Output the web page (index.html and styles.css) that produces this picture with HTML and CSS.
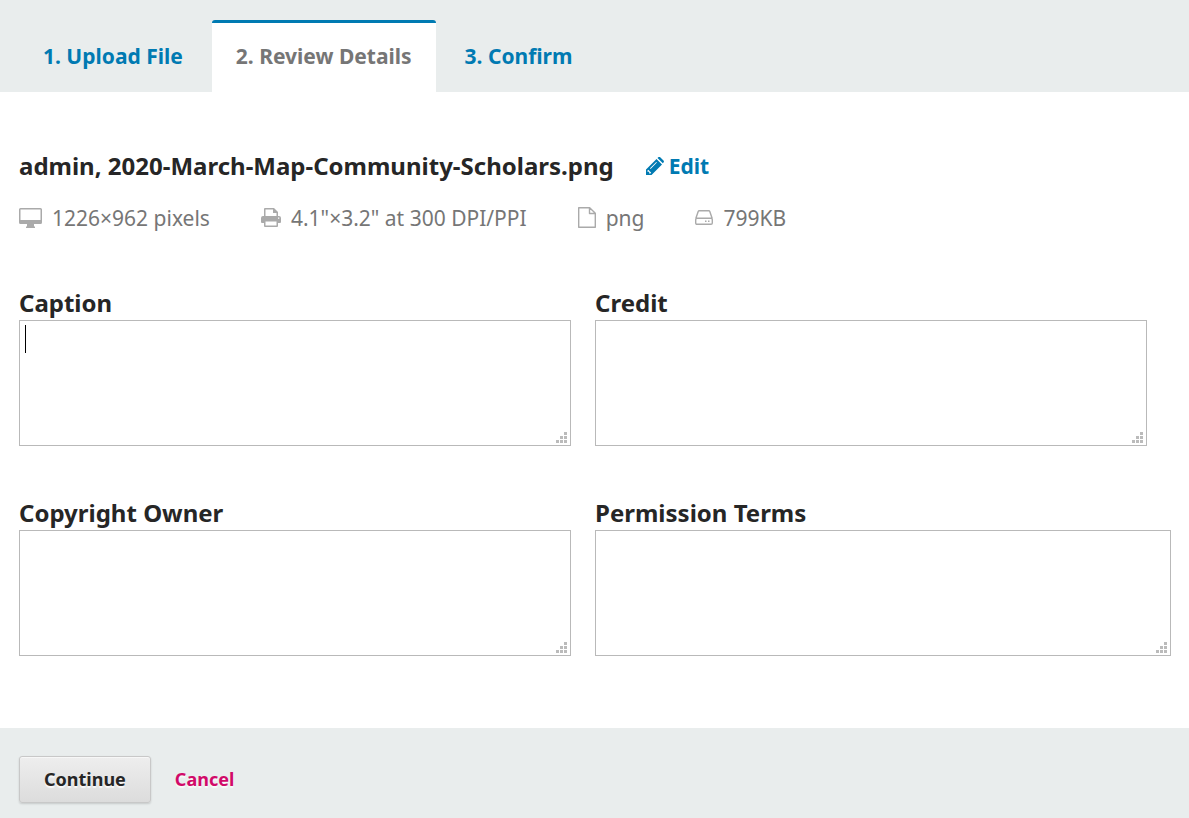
FILE: index.html
```
<!DOCTYPE html>
<html lang="en">
<head>
<meta charset="utf-8">
<title>Review Details</title>
<link rel="stylesheet" href="styles.css">
</head>
<body>
<nav class="tabs" aria-label="Upload steps">
  <a class="tab" href="#upload">1. Upload File</a>
  <a class="tab tab-active" href="#details" aria-current="step">2. Review Details</a>
  <a class="tab" href="#confirm">3. Confirm</a>
</nav>
<form class="form">
  <main class="content">
    <div class="heading">
      <h1 class="title">admin, 2020-March-Map-Community-Scholars.png</h1>
      <a class="edit" href="#edit">
        <svg class="pencil" viewBox="0 0 18 18" width="18" height="18" aria-hidden="true"><path fill="currentColor" fill-rule="evenodd" d="M0 18v-5.500L10.500 2l5.500 5.500L5.500 18zM1.500 13.600v1.100h1.700v1.800h1.200l.8-.8-2.900-2.900zM4 11.300l.6.6 6.300-6.300-.6-.6zM11.500 1l.8-.7c.6-.5 1.300-.5 1.900 0L17.500 3.600c.6.6.6 1.300 0 1.900L16.800 6.300z"/></svg>
        <span>Edit</span>
      </a>
    </div>
    <ul class="meta">
      <li class="meta-item">
        <svg width="23" height="20" viewBox="0 0 23 20" aria-hidden="true"><path fill="#aaa" fill-rule="evenodd" d="M1.500 0h20Q23 0 23 1.500v13q0 1.500-1.500 1.500H15v2.500h1V20H7v-1.500h1V16H1.500Q0 16 0 14.500v-13Q0 0 1.500 0zM1.500 1.500V12h20V1.500z"/></svg>
        <span>1226×962 pixels</span>
      </li>
      <li class="meta-item">
        <svg width="20" height="19" viewBox="0 0 20 19" aria-hidden="true"><path fill="#aaa" fill-rule="evenodd" d="M3 8V1q0-1 1-1h9l4 4v4h1q2 0 2 2v4q0 1-1 1h-2v3q0 1-1 1H4q-1 0-1-1v-3H1q-1 0-1-1v-4q0-2 2-2zM4.500 1.500V8h11V5H12V1.500zM4.500 13.500v4h11v-4zM17 9.500v1.300h1.300V9.500z"/></svg>
        <span>4.1"×3.2" at 300 DPI/PPI</span>
      </li>
      <li class="meta-item">
        <svg width="18" height="21" viewBox="0 0 18 21" aria-hidden="true"><path fill="none" stroke="#aaa" stroke-width="1.400" stroke-linejoin="round" d="M.7.7h11l5.600 5.600v14H.7zM11.500.7v5.800h5.800"/></svg>
        <span>png</span>
      </li>
      <li class="meta-item">
        <svg width="18" height="15" viewBox="0 0 18 15" aria-hidden="true"><path fill="none" stroke="#aaa" stroke-width="1.400" stroke-linejoin="round" d="M.8 8.500 3.200 1.500q.3-.8 1-.8h9.600q.7 0 1 .8l2.400 7M2 8.200h14q1.300 0 1.300 1.300V13q0 1.300-1.300 1.300H2Q.7 14.300.7 13V9.500Q.7 8.200 2 8.200z"/><path fill="#aaa" d="M10 10.500h1.500V12H10zM13 10.500h1.500V12H13z"/></svg>
        <span>799KB</span>
      </li>
    </ul>
    <div class="fields">
      <div class="field">
        <label class="label" for="caption">Caption</label>
        <div class="box">
          <textarea class="textarea" id="caption"></textarea>
          <span class="caret"></span>
          <svg class="grip" width="11" height="11" viewBox="0 0 11 11" aria-hidden="true"><path d="M8 0h3v3H8zM4 4h3v3H4zM8 4h3v3H8zM0 8h3v3H0zM4 8h3v3H4zM8 8h3v3H8z"/></svg>
        </div>
      </div>
      <div class="field">
        <label class="label" for="credit">Credit</label>
        <div class="box">
          <textarea class="textarea" id="credit"></textarea>
          <svg class="grip" width="11" height="11" viewBox="0 0 11 11" aria-hidden="true"><path d="M8 0h3v3H8zM4 4h3v3H4zM8 4h3v3H8zM0 8h3v3H0zM4 8h3v3H4zM8 8h3v3H8z"/></svg>
        </div>
      </div>
      <div class="field">
        <label class="label" for="owner">Copyright Owner</label>
        <div class="box">
          <textarea class="textarea" id="owner"></textarea>
          <svg class="grip" width="11" height="11" viewBox="0 0 11 11" aria-hidden="true"><path d="M8 0h3v3H8zM4 4h3v3H4zM8 4h3v3H8zM0 8h3v3H0zM4 8h3v3H4zM8 8h3v3H8z"/></svg>
        </div>
      </div>
      <div class="field field-last">
        <label class="label" for="terms">Permission Terms</label>
        <div class="box">
          <textarea class="textarea" id="terms"></textarea>
          <svg class="grip" width="11" height="11" viewBox="0 0 11 11" aria-hidden="true"><path d="M8 0h3v3H8zM4 4h3v3H4zM8 4h3v3H8zM0 8h3v3H0zM4 8h3v3H4zM8 8h3v3H8z"/></svg>
        </div>
      </div>
    </div>
  </main>
  <footer class="footer">
    <button class="continue" type="button">Continue</button>
    <a class="cancel" href="#cancel">Cancel</a>
  </footer>
</form>
</body>
</html>
```
FILE: styles.css
```
* {
  box-sizing: border-box;
}

body {
  display: flex;
  flex-direction: column;
  min-height: 100vh;
  margin: 0;
  background: #fff;
  color: #262626;
  font-family: "Noto Sans", sans-serif;
  font-size: 21px;
}

a {
  color: #007ab2;
  font-weight: 700;
  text-decoration: none;
}

.tabs {
  display: flex;
  gap: 5px;
  padding: 20px 19px 0;
  background: #e9eded;
}

.tab {
  padding: 19px 24px 21px;
  border-top: 3px solid transparent;
  border-radius: 3px 3px 0 0;
  line-height: 29px;
}

.tab-active {
  border-top-color: #007ab2;
  background: #fff;
  color: #767676;
}

.form {
  display: flex;
  flex: 1;
  flex-direction: column;
}

.content {
  flex: 1;
  padding: 56px 18px 72px 19px;
}

.heading {
  display: flex;
  align-items: baseline;
  gap: 32px;
}

.title {
  margin: 0;
  font-size: 24px;
  line-height: 35px;
}

.edit {
  display: flex;
  align-items: center;
  gap: 5px;
  line-height: 35px;
}

.meta {
  display: flex;
  flex-wrap: wrap;
  gap: 51px;
  margin: 18px 0 52px;
  padding: 0;
  color: #767676;
  line-height: 32px;
  list-style: none;
}

.meta-item {
  display: flex;
  align-items: center;
  gap: 10px;
}

.fields {
  display: grid;
  grid-template-columns: 1fr 1fr;
  row-gap: 50px;
}

.field {
  padding-right: 24px;
}

.field-last {
  padding-right: 0;
}

.label {
  display: block;
  font-size: 24px;
  font-weight: 700;
  line-height: 34px;
}

.box {
  position: relative;
}

.textarea {
  display: block;
  width: 100%;
  height: 126px;
  padding: 4px 5px;
  border: 1px solid #b9b9b9;
  background: #fff;
  color: inherit;
  font: inherit;
  resize: none;
}

.caret {
  position: absolute;
  top: 5px;
  left: 6px;
  width: 1px;
  height: 28px;
  background: #000;
}

.grip {
  position: absolute;
  right: 4px;
  bottom: 3px;
  fill: #bbb;
}

.footer {
  display: flex;
  align-items: center;
  gap: 24px;
  padding: 28px 19px 15px;
  background: #e9eded;
  font-size: 18px;
}

.continue {
  padding: 10px 24px;
  border: 1px solid #c8c8c8;
  border-radius: 3px;
  background: linear-gradient(#eee, #dcdcdc);
  box-shadow: inset 0 1px 0 #f7f7f7, 0 1px 2px rgba(0, 0, 0, 0.15);
  color: #262626;
  font: 700 18px/25px "Noto Sans", sans-serif;
  text-shadow: 0 2px 1px #f9f9f9;
}

.cancel {
  color: #d10a69;
  line-height: 25px;
  text-shadow: 0 2px 1px #f9f9f9;
}
```
